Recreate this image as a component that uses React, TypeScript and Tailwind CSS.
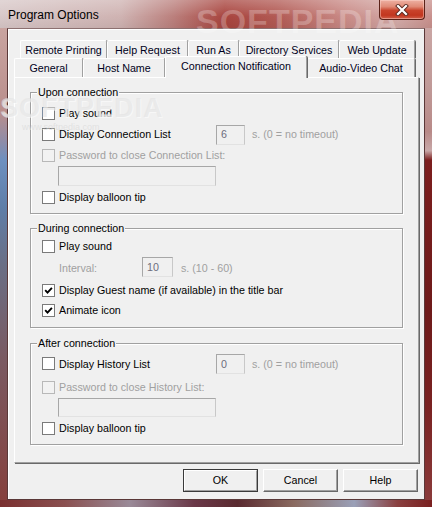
import React from "react";

const F = "font-['Liberation_Sans',Arial,sans-serif]";

function Box({ checked = false, disabled = false }: { checked?: boolean; disabled?: boolean }) {
  return (
    <span
      className={
        disabled
          ? "flex h-[13px] w-[13px] shrink-0 items-center justify-center border border-[#b8b8b8] bg-[#f2f2f2]"
          : "flex h-[13px] w-[13px] shrink-0 items-center justify-center border border-[#7a7a7a] bg-white"
      }
    >
      {checked && (
        <svg width="9" height="9" viewBox="0 0 9 9">
          <path d="M1.2 4.2 L3.5 6.6 L7.9 1.8" fill="none" stroke="#000" strokeWidth="1.9" />
        </svg>
      )}
    </span>
  );
}

function Label({ text, disabled = false }: { text: string; disabled?: boolean }) {
  return (
    <span className={disabled ? "whitespace-nowrap text-[#a0a0a0]" : "whitespace-nowrap text-black"}>{text}</span>
  );
}

function Field({ value = "", w, h }: { value?: string; w: string; h: string }) {
  return (
    <span
      className={`${w} ${h} flex items-center border border-[#a7a7a7] border-r-[#c8c8c8] border-b-[#e2e2e2] bg-[#f0f0f0] pl-[4px] text-[#6d6d7d]`}
    >
      {value}
    </span>
  );
}

function Group({ title, children, h, mt }: { title: string; children: React.ReactNode; h: string; mt: string }) {
  return (
    <div
      className={`relative w-[373px] ${h} ${mt} border border-[#a0a0a0] shadow-[1px_1px_0_#ffffff,inset_1px_1px_0_#ffffff]`}
    >
      <span className="absolute left-[6px] top-[-7px] bg-[#f0f0f0] px-[1px] leading-[13px] text-black">{title}</span>
      {children}
    </div>
  );
}

function Tab({ label, w }: { label: string; w: string }) {
  return (
    <div
      className={`${w} h-full flex justify-center rounded-t-[2px] border-t border-l border-r border-t-white border-l-white border-r-[#a0a0a0] shadow-[1px_0_0_#696969] pt-[2px] leading-[14px] text-[#000020]`}
    >
      {label}
    </div>
  );
}

function Button({ label, primary = false }: { label: string; primary?: boolean }) {
  return (
    <div className={primary ? "h-[23px] w-[75px] border border-[#3a3a3a]" : "h-[23px] w-[75px]"}>
      <div
        className={
          primary
            ? "flex h-full w-full items-center justify-center border border-t-white border-l-white border-r-[#a0a0a0] border-b-[#a0a0a0] bg-[#f0f0f0]"
            : "flex h-full w-full items-center justify-center border border-t-white border-l-white border-r-[#696969] border-b-[#696969] bg-[#f0f0f0] shadow-[inset_-1px_-1px_0_#a0a0a0]"
        }
      >
        {label}
      </div>
    </div>
  );
}

export default function App() {
  return (
    <div className={`${F} relative flex h-[507px] w-[432px] flex-col overflow-hidden text-[10.7px]`}>
      {/* Title bar */}
      <div className="relative flex h-[28px] shrink-0 items-start bg-[linear-gradient(90deg,#d8c8c8_0%,#cfb3b2_28%,#bb807d_40%,#a8443e_52%,#b25a54_64%,#c98a86_80%,#d2aaa7_92%,#c8908c_100%)]">
        <div className="absolute inset-0 bg-[linear-gradient(180deg,rgba(255,255,255,0.25)_0%,rgba(255,255,255,0)_60%,rgba(0,0,0,0.05)_100%)]" />
        <span className="pointer-events-none absolute left-[196px] top-[-4px] select-none text-[34px] font-bold tracking-[1px] text-white/25">
          SOFTPEDIA
        </span>
        <span className="relative pl-[8px] pt-[7px] text-[12px] leading-[16px] text-black">Program Options</span>
        <div className="relative ml-auto mr-[7px] flex h-[20px] w-[46px] items-center justify-center rounded-b-[4px] border border-t-0 border-[#5a2218] bg-[linear-gradient(180deg,#eeb1a3_0%,#e08a76_35%,#c9432b_55%,#c2361f_80%,#d0604a_100%)] shadow-[inset_0_0_0_1px_rgba(255,220,210,0.45)]">
          <svg width="14" height="12" viewBox="0 0 14 12">
            <path d="M3 2 L11 10 M11 2 L3 10" stroke="#5a2a22" strokeWidth="4" strokeLinecap="square" />
            <path d="M3 2 L11 10 M11 2 L3 10" stroke="#ffffff" strokeWidth="2.2" strokeLinecap="square" />
          </svg>
        </div>
      </div>

      {/* Middle */}
      <div className="flex h-[472px] shrink-0">
        <div className="w-[7px] bg-[linear-gradient(180deg,#c9a4a0_0%,#b98e8c_18%,#8f8ca8_24%,#6e90c0_28%,#5f7ea8_38%,#6a6f86_50%,#7a5a62_70%,#86413e_100%)]" />
        <div className="flex w-[418px] flex-col border border-[#5a3838] border-t-[#8c7070] bg-[#f0f0f0] shadow-[inset_1px_1px_0_#ffffff]">
          {/* Tabs */}
          <div className="mt-[11px] flex h-[18px] pl-[12px]">
            <Tab label="Remote Printing" w="w-[87px]" />
            <Tab label="Help Request" w="w-[81px]" />
            <Tab label="Run As" w="w-[51px]" />
            <Tab label="Directory Services" w="w-[100px]" />
            <Tab label="Web Update" w="w-[76px]" />
          </div>
          <div className="flex h-[19px] pl-[6px]">
            <Tab label="General" w="w-[69px]" />
            <Tab label="Host Name" w="w-[82px]" />
            <div className="relative z-10 -mt-[2px] flex h-[22px] w-[142px] justify-center rounded-t-[2px] border-t border-l border-r border-t-white border-l-white border-r-[#a0a0a0] bg-[#f0f0f0] shadow-[1px_0_0_#696969] pt-[2px] leading-[14px] text-[#000020]">
              Connection Notification
            </div>
            <Tab label="Audio-Video Chat" w="w-[108px]" />
          </div>

          {/* Panel */}
          <div className="ml-[6px] h-[386px] w-[405px] border border-t-white border-l-white border-r-[#a0a0a0] border-b-[#a0a0a0] bg-[#f0f0f0] pl-[15px] pt-[14px] shadow-[1px_1px_0_#696969]">
            <Group title="Upon connection" h="h-[122px]" mt="mt-0">
              <div className="pl-[11px] pt-[10px]">
                <div className="flex h-[21px] items-center gap-[4px]">
                  <Box />
                  <Label text="Play sound" />
                </div>
                <div className="flex h-[21px] items-center">
                  <div className="flex w-[174px] items-center gap-[4px]">
                    <Box />
                    <Label text="Display Connection List" />
                  </div>
                  <Field value="6" w="w-[29px]" h="h-[20px]" />
                  <span className="ml-[7px] text-[#a0a0a0]">s. (0 = no timeout)</span>
                </div>
                <div className="flex h-[21px] items-center gap-[4px]">
                  <Box disabled />
                  <Label text="Password to close Connection List:" disabled />
                </div>
                <div className="pl-[16px]">
                  <Field w="w-[158px]" h="h-[20px]" />
                </div>
                <div className="mt-[1px] flex h-[21px] items-center gap-[4px]">
                  <Box />
                  <Label text="Display balloon tip" />
                </div>
              </div>
            </Group>

            <Group title="During connection" h="h-[100px]" mt="mt-[14px]">
              <div className="pl-[11px] pt-[7px]">
                <div className="flex h-[20px] items-center gap-[4px]">
                  <Box />
                  <Label text="Play sound" />
                </div>
                <div className="mt-[1px] flex h-[20px] items-center pl-[17px]">
                  <span className="w-[83px] pt-[3px] text-[#a0a0a0]">Interval:</span>
                  <Field value="10" w="w-[31px]" h="h-[20px]" />
                  <span className="ml-[8px] pt-[3px] text-[#a0a0a0]">s. (10 - 60)</span>
                </div>
                <div className="mt-[3px] flex h-[20px] items-center gap-[4px]">
                  <Box checked />
                  <Label text="Display Guest name (if available) in the title bar" />
                </div>
                <div className="flex h-[20px] items-center gap-[4px]">
                  <Box checked />
                  <Label text="Animate icon" />
                </div>
              </div>
            </Group>

            <Group title="After connection" h="h-[102px]" mt="mt-[15px]">
              <div className="pl-[11px] pt-[10px]">
                <div className="flex h-[20px] items-center">
                  <div className="flex w-[174px] items-center gap-[4px]">
                    <Box />
                    <Label text="Display History List" />
                  </div>
                  <Field value="0" w="w-[29px]" h="h-[20px]" />
                  <span className="ml-[7px] text-[#a0a0a0]">s. (0 = no timeout)</span>
                </div>
                <div className="mt-[3px] flex h-[20px] items-center gap-[4px]">
                  <Box disabled />
                  <Label text="Password to close History List:" disabled />
                </div>
                <div className="mt-[1px] pl-[16px]">
                  <Field w="w-[158px]" h="h-[19px]" />
                </div>
                <div className="mt-[1px] flex h-[20px] items-center gap-[4px]">
                  <Box />
                  <Label text="Display balloon tip" />
                </div>
              </div>
            </Group>
          </div>

          {/* Buttons */}
          <div className="mt-[6px] flex justify-end gap-[5px] pr-[6px]">
            <Button label="OK" primary />
            <Button label="Cancel" />
            <Button label="Help" />
          </div>
        </div>
        <div className="w-[7px] bg-[linear-gradient(180deg,#caa6a4_0%,#c09a98_12%,#b88a88_22%,#c8a8a8_26%,#7c1e1e_28%,#6e1a1a_60%,#7a2222_80%,#8a3a3a_100%)]" />
      </div>

      {/* Bottom frame */}
      <div className="h-[7px] shrink-0 bg-[linear-gradient(90deg,#7a3030_0%,#8a5050_15%,#9a8a98_30%,#6a3848_45%,#5a2a30_55%,#8a6a60_68%,#9aa0b8_82%,#8a4040_92%,#7a2020_100%)]" />

      {/* Watermark */}
      <span className="pointer-events-none absolute left-[0px] top-[88px] select-none text-[27px] font-bold tracking-[1px] text-[#e2e2e2]/60 [text-shadow:1px_1px_0_rgba(255,255,255,0.5)]">
        SOFTPEDIA
      </span>
      <span className="pointer-events-none absolute left-[22px] top-[121px] select-none text-[9px] text-[#dadada]/70">
        www.softpedia.com
      </span>
    </div>
  );
}
